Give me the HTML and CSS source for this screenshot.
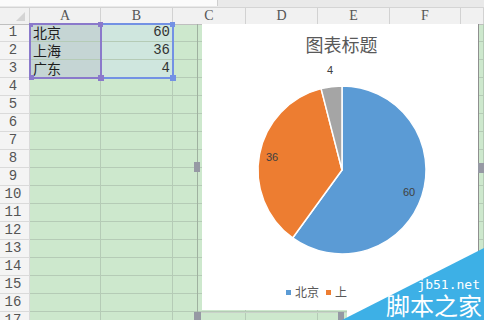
FILE: index.html
```html
<!DOCTYPE html>
<html lang="zh-CN">
  <head>
    <meta charset="UTF-8" />
    <title>图表标题</title>
    <link rel="stylesheet" href="styles.css">
  </head>
  <body>
    <div class="topbar"><div class="namebox"></div></div>

    <div class="sheet">
      <div class="row head">
        <div class="corner"></div>
        <div>A</div><div>B</div><div>C</div><div>D</div><div>E</div><div>F</div><div></div>
      </div>
      <div class="row"><b>1</b><i class="cat">北京</i><i class="val">60</i><i></i><i></i><i></i><i></i><i></i></div>
      <div class="row"><b>2</b><i class="cat">上海</i><i class="val">36</i><i></i><i></i><i></i><i></i><i></i></div>
      <div class="row"><b>3</b><i class="cat">广东</i><i class="val">4</i><i></i><i></i><i></i><i></i><i></i></div>
      <div class="row"><b>4</b><i></i><i></i><i></i><i></i><i></i><i></i><i></i></div>
      <div class="row"><b>5</b><i></i><i></i><i></i><i></i><i></i><i></i><i></i></div>
      <div class="row"><b>6</b><i></i><i></i><i></i><i></i><i></i><i></i><i></i></div>
      <div class="row"><b>7</b><i></i><i></i><i></i><i></i><i></i><i></i><i></i></div>
      <div class="row"><b>8</b><i></i><i></i><i></i><i></i><i></i><i></i><i></i></div>
      <div class="row"><b>9</b><i></i><i></i><i></i><i></i><i></i><i></i><i></i></div>
      <div class="row"><b>10</b><i></i><i></i><i></i><i></i><i></i><i></i><i></i></div>
      <div class="row"><b>11</b><i></i><i></i><i></i><i></i><i></i><i></i><i></i></div>
      <div class="row"><b>12</b><i></i><i></i><i></i><i></i><i></i><i></i><i></i></div>
      <div class="row"><b>13</b><i></i><i></i><i></i><i></i><i></i><i></i><i></i></div>
      <div class="row"><b>14</b><i></i><i></i><i></i><i></i><i></i><i></i><i></i></div>
      <div class="row"><b>15</b><i></i><i></i><i></i><i></i><i></i><i></i><i></i></div>
      <div class="row"><b>16</b><i></i><i></i><i></i><i></i><i></i><i></i><i></i></div>
      <div class="row"><b>17</b><i></i><i></i><i></i><i></i><i></i><i></i><i></i></div>

      <!-- data range highlight -->
      <div class="range range-val">
        <span class="hd hd-tr"></span><span class="hd hd-br"></span>
      </div>
      <div class="range range-cat">
        <span class="hd hd-tl"></span><span class="hd hd-tr"></span>
        <span class="hd hd-bl"></span><span class="hd hd-br"></span>
      </div>

      <!-- floating chart -->
      <div class="chart-frame">
        <span class="grip grip-l"></span>
        <span class="grip grip-r"></span>
        <span class="grip grip-bl"></span>
        <span class="grip grip-b"></span>
        <div class="chart">
          <div class="chart-title">图表标题</div>
          <svg class="pie" width="278" height="228" viewBox="0 0 278 228">
            <g stroke="#fff" stroke-width="1.5" stroke-linejoin="round">
              <path fill="#5b9bd5" d="M140 115 L140 31 A84 84 0 1 1 90.63 182.96 Z" />
              <path fill="#ed7d31" d="M140 115 L90.63 182.96 A84 84 0 0 1 119.11 33.64 Z" />
              <path fill="#a5a5a5" d="M140 115 L119.11 33.64 A84 84 0 0 1 140 31 Z" />
            </g>
            <g class="pie-label">
              <text x="207" y="141">60</text>
              <text x="70" y="106">36</text>
              <text x="128" y="19">4</text>
            </g>
          </svg>
          <div class="legend">
            <span class="key"><em class="sw blue"></em>北京</span>
            <span class="key"><em class="sw orange"></em>上海</span>
            <span class="key"><em class="sw gray"></em>广东</span>
          </div>
        </div>
      </div>
    </div>

    <svg class="watermark" width="142" height="72" viewBox="0 0 142 72">
      <polygon fill="#fff" points="5,36 5,72 142,72 142,2" />
      <polygon fill="#3db0e6" points="0,72 142,0 142,72" />
      <text class="wm-url" x="138" y="41">jb51.net</text>
      <text class="wm-name" x="140" y="67">脚本之家</text>
    </svg>
  </body>
</html>
```

FILE: styles.css
```css
*,
*::before,
*::after {
  box-sizing: border-box;
}
:root {
  --sheet: #cde8cd;
  --grid: #b5cbb6;
  --head: #f1f1f1;
  --head-line: #d2d2d2;
}
body {
  margin: 0;
  width: 484px;
  height: 320px;
  overflow: hidden;
  background: var(--sheet);
  font-family: "Noto Sans CJK SC", sans-serif;
  position: relative;
}

.topbar {
  height: 8px;
  background: #e9e9e9;
  border-bottom: 1px solid #d4d4d4;
  display: flex;
}
.namebox {
  width: 218px;
  height: 6px;
  background: #fbfbfb;
  border-right: 1px solid #cfcfcf;
}

.sheet {
  position: relative;
}

.row {
  display: grid;
  grid-template-columns: 30px 71px 72px 73px 72px 72px 71px 1fr;
  height: 18px;
}
.row > * {
  border-right: 1px solid var(--grid);
  border-bottom: 1px solid var(--grid);
  font-style: normal;
  font-size: 14px;
  line-height: 17px;
  color: #1e1e1e;
  white-space: nowrap;
}
.row > b {
  background: #f4f4f4;
  border-color: #dadada;
  font-family: "Liberation Mono", monospace;
  font-weight: normal;
  font-size: 14px;
  color: #555;
  text-align: center;
  padding-right: 3px;
}

.head {
  height: 16px;
}
.head > div {
  background: var(--head);
  border-color: var(--head-line);
  border-bottom-color: #bfbfbf;
  font-family: "Liberation Serif", serif;
  font-size: 14px;
  line-height: 16px;
  color: #555;
  text-align: center;
}
.corner {
  position: relative;
}
.corner::after {
  content: "";
  position: absolute;
  right: 4px;
  bottom: 3px;
  border-left: 9px solid transparent;
  border-bottom: 9px solid #d4d4d4;
}

.cat {
  background: #c5d5d4;
  padding-left: 3px;
}
.val {
  background: #cfe6de;
  text-align: right;
  padding-right: 2px;
  font-family: "Liberation Mono", monospace;
  color: #333;
}

/* selected data range */
.range {
  position: absolute;
  top: 15px;
  height: 56px;
  border: 2px solid;
}
.range-cat {
  left: 29px;
  width: 73px;
  border-color: #8a79cb;
}
.range-val {
  left: 100px;
  width: 74px;
  border-color: #7391e4;
}
.hd {
  position: absolute;
  width: 5px;
  height: 5px;
}
.range-cat .hd { background: #8a79cb; }
.range-val .hd { background: #7391e4; }
.hd-tl { left: -2px; top: -2px; width: 4px; height: 4px; }
.hd-tr { right: -3px; top: -3px; }
.hd-bl { left: -2px; bottom: -3px; }
.hd-br { right: -4px; bottom: -4px; width: 6px; height: 6px; }

/* chart */
.chart-frame {
  position: absolute;
  left: 197px;
  top: 16px;
  width: 285px;
  height: 289px;
  border-left: 1px solid #9fb1a0;
  border-bottom: 1px solid #c9d2c9;
}
.grip {
  position: absolute;
  background: #9699a4;
}
.grip-l { left: -4px; top: 138px; width: 6px; height: 10px; }
.grip-r { right: -2px; top: 139px; width: 6px; height: 10px; }
.grip-bl { left: -4px; bottom: -10px; width: 7px; height: 10px; }
.grip-b { left: 140px; bottom: -8px; width: 6px; height: 8px; }

.chart {
  margin-left: 4px;
  width: 277px;
  height: 286px;
  background: #fff;
  border-right: 1px solid #8f8f8f;
  display: flex;
  flex-direction: column;
}
.chart-title {
  margin-top: 9px;
  text-align: center;
  padding-left: 3px;
  font-size: 18px;
  line-height: 22px;
  color: #595959;
}
.pie {
  display: block;
}
.pie-label text {
  font-family: "Liberation Sans", sans-serif;
  font-size: 11px;
  fill: #404040;
  text-anchor: middle;
}
.legend {
  margin-top: 1px;
  display: flex;
  gap: 7px;
  padding-left: 84px;
  font-size: 12px;
  line-height: 16px;
  color: #595959;
}
.key {
  display: flex;
  align-items: center;
  gap: 4px;
}
.sw {
  width: 5px;
  height: 5px;
}
.blue { background: #5b9bd5; }
.orange { background: #ed7d31; }
.gray { background: #a5a5a5; }

/* site watermark */
.watermark {
  position: absolute;
  right: 0;
  bottom: 0;
}
.wm-url {
  font-family: "DejaVu Sans Mono", monospace;
  font-size: 13px;
  fill: #fff;
  text-anchor: end;
}
.wm-name {
  font-family: "Noto Sans CJK SC", sans-serif;
  font-size: 24px;
  fill: #fff;
  text-anchor: end;
}
```
